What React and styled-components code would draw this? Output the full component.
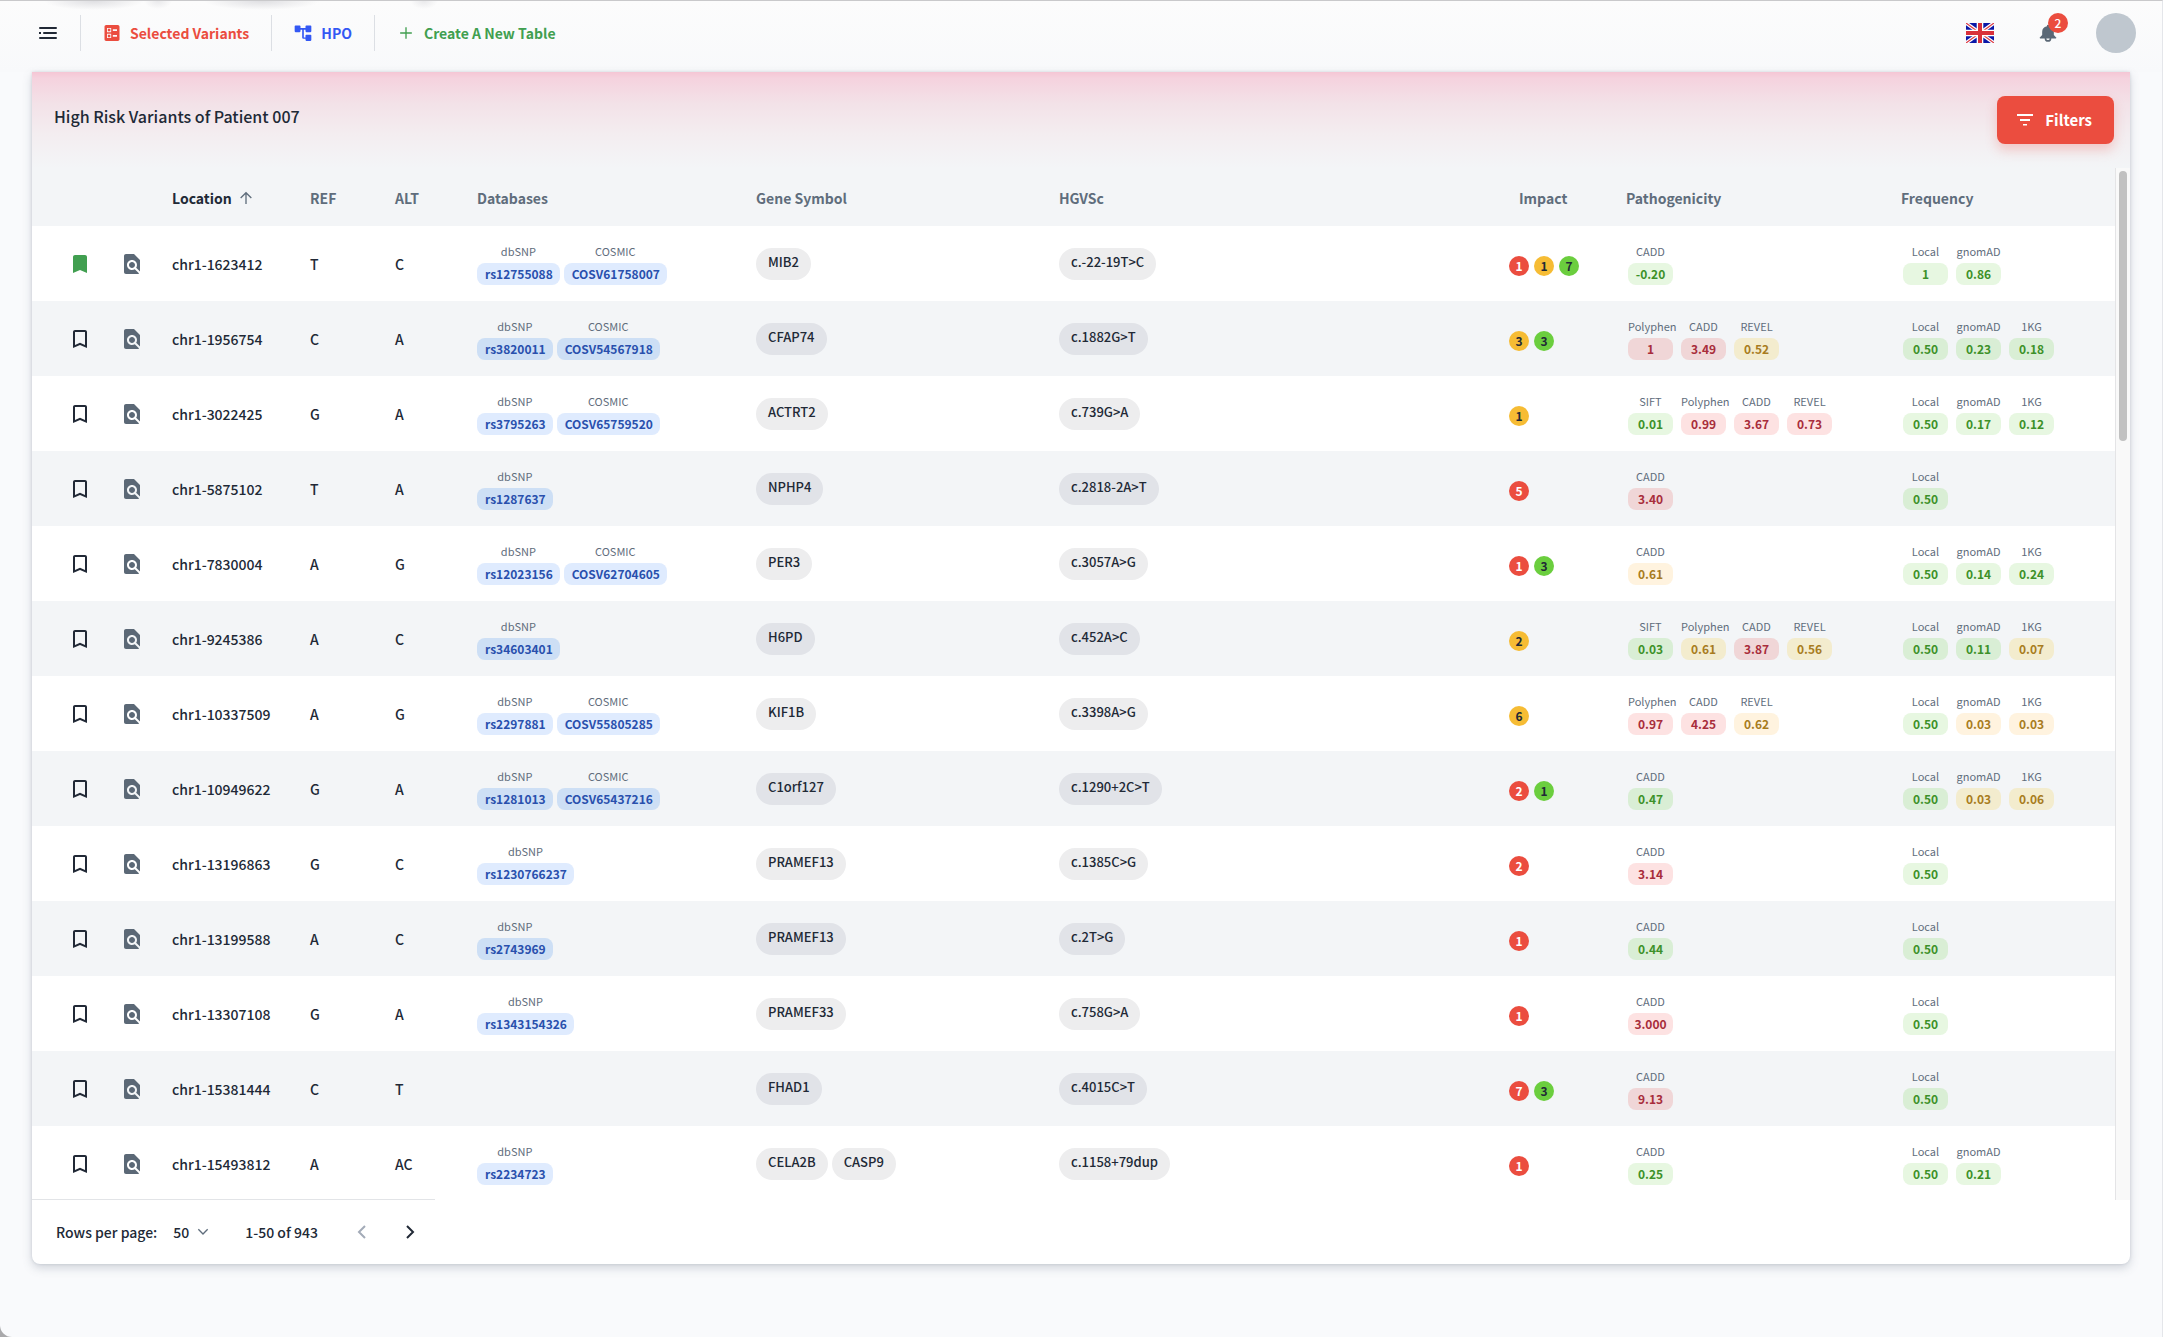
import React from 'react';
import styled, { createGlobalStyle, css } from 'styled-components';

const Global = createGlobalStyle`
  * { box-sizing: border-box; }
  html, body, #root { min-height: 100vh; }
  body {
    margin: 0;
    background: #f9fafc;
    color: #212936;
    font-family: "Noto Sans CJK SC", "Noto Sans", sans-serif;
    font-size: 14px;
    font-weight: 500;
    line-height: 24px;
  }
  button, select { font: inherit; color: inherit; }
  button { border: 0; background: none; padding: 0; cursor: pointer; }
`;

const Page = styled.div`
  min-height: 100vh;
  display: flex;
  flex-direction: column;
  background: #f9fafc;
  border-top: 1px solid #c9c9cb;
  border-right: 1px solid #e4e6ea;
  border-bottom-left-radius: 12px;
`;

const Backdrop = styled.div`
  background: #a9a9ab;
`;

const TopBar = styled.header`
  display: flex;
  align-items: center;
  justify-content: space-between;
  height: 71px;
  padding: 0 26px 7px 35px;
  background:
    radial-gradient(ellipse 50px 9px at 94px 0, #dfdfe2, transparent) no-repeat,
    radial-gradient(ellipse 14px 8px at 158px 0, #e9e9eb, transparent) no-repeat,
    radial-gradient(ellipse 58px 9px at 262px 0, #dfdfe2, transparent) no-repeat,
    radial-gradient(ellipse 14px 8px at 424px 0, #e9e9eb, transparent) no-repeat,
    linear-gradient(#fcfcfc, #f8f9fb);
`;

const Nav = styled.nav`
  display: flex;
  align-items: center;
`;

const MenuButton = styled.button`
  display: flex;
  padding: 0 21px 0 0;
`;

const Tab = styled.a`
  display: flex;
  align-items: center;
  height: 36px;
  gap: 8px;
  padding: 0 22px 0 21px;
  border-left: 1px solid #dcdfe4;
  color: ${(p) => p.$color};
  font-weight: 600;
  text-decoration: none;
  white-space: nowrap;
`;

const Tools = styled.div`
  display: flex;
  align-items: center;
  gap: 38px;
`;

const IconButton = styled.button`
  position: relative;
  display: flex;
`;

const BellButton = styled(IconButton)`
  margin: 0 0 0 6px;
`;

const Badge = styled.span`
  position: absolute;
  top: -10px;
  right: -10px;
  width: 20px;
  height: 20px;
  border-radius: 50%;
  background: #eb4d3f;
  color: #fff;
  font-size: 12px;
  line-height: 20px;
  text-align: center;
`;

const Avatar = styled.button`
  width: 40px;
  height: 40px;
  border-radius: 50%;
  background: #bfc7cf;
`;

const Card = styled.main`
  margin: 0 32px 72px;
  display: flex;
  flex-direction: column;
  background: #fff;
  border-radius: 0 0 8px 8px;
  box-shadow: 0 4px 10px rgba(90, 105, 125, 0.25), 0 0 3px rgba(90, 105, 125, 0.2);
`;

const CardHeader = styled.div`
  display: flex;
  justify-content: space-between;
  align-items: center;
  height: 96px;
  padding: 0 16px 0 22px;
  background: linear-gradient(#f5c6d5 0, #f5d2de 6px, #f3e2e8 32px, #f3edf0 62px, #f3f5f7 96px);
`;

const Title = styled.h1`
  margin: 0 0 8px;
  font-size: 16px;
  line-height: 24px;
  font-weight: 500;
`;

const FilterButton = styled.button`
  display: flex;
  align-items: center;
  gap: 8px;
  height: 48px;
  padding: 0 22px 0 16px;
  border-radius: 8px;
  background: #eb4d3f;
  color: #fff;
  font-size: 15px;
  font-weight: 600;
  line-height: 26px;
  box-shadow: 0 6px 12px rgba(235, 77, 63, 0.25);
`;

const Viewport = styled.div`
  display: flex;
  height: 1032px;
`;

const TableArea = styled.div`
  flex: 1;
  min-width: 0;
  overflow: hidden;
`;

const ScrollTrack = styled.div`
  width: 15px;
  padding: 3px;
  background: #f9f9f9;
  border-left: 1px solid #e4e4e6;
`;

const ScrollThumb = styled.div`
  width: 8px;
  height: 270px;
  border-radius: 4px;
  background: #c1c1c1;
`;

const Table = styled.table`
  width: 100%;
  table-layout: fixed;
  border-collapse: collapse;
`;

const Col = styled.col`
  width: ${(p) => (p.$w ? `${p.$w}px` : 'auto')};
`;

const HeadCell = styled.th`
  height: 58px;
  padding: 2px 0 0 ${(p) => p.$inset || 16}px;
  background: #f3f5f7;
  color: ${(p) => (p.$active ? '#212936' : '#5f6d7c')};
  font-weight: 600;
  text-align: left;
  white-space: nowrap;
`;

const SortButton = styled.button`
  display: flex;
  align-items: center;
  gap: 6px;
  font-weight: 600;
`;

const Row = styled.tr`
  height: 75px;
  background: ${(p) => (p.$alt ? '#f3f5f7' : '#fff')};
`;

const Cell = styled.td`
  padding: 0 0 0 ${(p) => p.$inset || 16}px;
  vertical-align: middle;
  white-space: nowrap;
`;

const Group = styled.div`
  display: flex;
  gap: ${(p) => p.$gap}px;
`;

const Labelled = styled.div`
  display: flex;
  flex-direction: column;
  text-align: center;
  ${(p) => p.$w && css`width: ${p.$w}px;`}
`;

const Caption = styled.span`
  padding-bottom: 4px;
  color: #5f6d7c;
  font-size: 11px;
  font-weight: 400;
  line-height: 16px;
  white-space: nowrap;
`;

const DbLink = styled.a`
  height: 22px;
  padding: 0 7px 0 8px;
  border-radius: 8px;
  background: ${(p) => (p.$alt ? '#cddff5' : '#dfebfe')};
  color: #2950ad;
  font-size: 12px;
  line-height: 22px;
  font-weight: 700;
  text-decoration: none;
`;

const tones = {
  g: { bg: '#e7f7e1', alt: '#d9eed5', fg: '#3d9129' },
  r: { bg: '#fde2e2', alt: '#f0d6d7', fg: '#a82d3b' },
  y: { bg: '#fff3df', alt: '#f3ecce', fg: '#a87c1f' },
};

const Score = styled.span`
  height: 22px;
  border-radius: 8px;
  background: ${(p) => (p.$alt ? tones[p.$tone].alt : tones[p.$tone].bg)};
  color: ${(p) => tones[p.$tone].fg};
  font-size: 12px;
  line-height: 22px;
  font-weight: 700;
`;

const Pill = styled.span`
  height: 32px;
  padding: 0 12px;
  border-radius: 16px;
  background: ${(p) => (p.$alt ? '#e1e3e8' : '#ededee')};
  font-size: 13px;
  line-height: 28px;
`;

const PillGroup = styled(Group)`
  padding-top: 1px;
`;

const impactTones = {
  r: ['#eb4d3f', '#fff'],
  y: ['#f6bc34', '#212936'],
  g: ['#6bce3e', '#212936'],
};

const Impact = styled.span`
  width: 20px;
  height: 20px;
  border-radius: 50%;
  background: ${(p) => impactTones[p.$tone][0]};
  color: ${(p) => impactTones[p.$tone][1]};
  font-size: 12px;
  line-height: 20px;
  font-weight: 600;
  text-align: center;
`;

const ImpactGroup = styled(Group)`
  padding-top: 5px;
`;

const ScoreGroup = styled(Group)`
  padding-left: 2px;
`;

const Footer = styled.footer`
  display: flex;
  align-items: center;
  height: 64px;
  padding-left: 24px;
`;

const FooterRule = styled.hr`
  width: 403px;
  height: 1px;
  margin: -1px 0 0;
  border: 0;
  background: #e2e4e7;
`;

const SelectWrap = styled.span`
  display: flex;
  align-items: center;
  padding-left: 16px;
`;

const Select = styled.select`
  appearance: none;
  width: 20px;
  margin-right: 2px;
  padding: 0;
  border: 0;
  background: none;
`;

const Range = styled.span`
  padding: 0 32px 0 34px;
`;

const Pager = styled.div`
  display: flex;
  gap: 24px;
`;

const Svg = ({ size = 24, children, ...rest }) => (
  <svg width={size} height={size} viewBox="0 0 24 24" fill="currentColor" aria-hidden="true" {...rest}>
    {children}
  </svg>
);

const MenuIcon = () => (
  <Svg>
    <path d="M5 6h16a1 1 0 0 1 0 2H5a1 1 0 0 1 0-2zM4 11h2v2H4zM9 11h12a1 1 0 0 1 0 2H9a1 1 0 0 1 0-2zM5 16h16a1 1 0 0 1 0 2H5a1 1 0 0 1 0-2z" />
  </Svg>
);
const BallotIcon = () => (
  <Svg size={20}>
    <path d="M13 9.500h5v-2h-5v2zm0 7h5v-2h-5v2zm6 5H5c-1.100 0-2-.9-2-2V4.500c0-1.100.9-2 2-2h14c1.100 0 2 .9 2 2v15c0 1.100-.9 2-2 2zM6 11h5V6H6v5zm1-4h3v3H7V7zM6 18h5v-5H6v5zm1-4h3v3H7v-3z" />
  </Svg>
);
const TreeIcon = () => (
  <Svg size={20}>
    <path d="M21 11h-5a1 1 0 0 1-1-1V8h-2v9.500h2V15a1 1 0 0 1 1-1h5a1 1 0 0 1 1 1v5.500a1 1 0 0 1-1 1h-5a1 1 0 0 1-1-1V19h-2.500a1.500 1.500 0 0 1-1.500-1.500V8H9v2a1 1 0 0 1-1 1H3a1 1 0 0 1-1-1V4a1 1 0 0 1 1-1h5a1 1 0 0 1 1 1v2h6V4a1 1 0 0 1 1-1h5a1 1 0 0 1 1 1v6a1 1 0 0 1-1 1z" />
  </Svg>
);
const PlusIcon = () => (
  <Svg size={20}>
    <path d="M19 12.800h-6.200V19h-1.600v-6.200H5v-1.600h6.200V5h1.600v6.200H19z" />
  </Svg>
);
const BellIcon = () => (
  <Svg size={20} color="#5b6876">
    <path d="M19 14.500V10.800A7 7 0 0 0 13.300 3.900V3.500a1.300 1.300 0 0 0-2.600 0v.4A7 7 0 0 0 5 10.800v3.700L2.500 17a.8.8 0 0 0 .6 1.500h4.900a4 4 0 0 0 8 0h4.900a.8.8 0 0 0 .6-1.500zM12 20.500a2 2 0 0 1-2-2h4a2 2 0 0 1-2 2z" />
  </Svg>
);
const FlagIcon = () => (
  <svg width="28" height="20" viewBox="0 0 28 20" aria-hidden="true">
    <rect width="28" height="20" fill="#0a17a7" />
    <path d="M0 0l28 20M28 0L0 20" stroke="#fff" strokeWidth="3.600" />
    <path d="M0 0l11 8M28 20l-11-8M28 0L17 8M0 20l11-8" stroke="#db3b45" strokeWidth="1.200" />
    <path d="M14 0v20M0 10h28" stroke="#fff" strokeWidth="6.600" />
    <path d="M14 0v20M0 10h28" stroke="#d9303a" strokeWidth="4" />
  </svg>
);
const FilterIcon = () => (
  <Svg>
    <path d="M4 6h16v2H4zM7 11h10v2H7zM10 16h4v1.500h-4z" />
  </Svg>
);
const ArrowUpIcon = () => (
  <Svg size={16} color="#5f6d7c" fill="none" stroke="currentColor" strokeWidth="2">
    <path d="M12 21V4M4 12l8-8 8 8" />
  </Svg>
);
const BookmarkIcon = ({ on }) => (
  <Svg color={on ? '#419f50' : '#212936'} display="block">
    <path
      d={
        on
          ? 'M17 3H7c-1.100 0-2 .9-2 2v16l7-3 7 3V5c0-1.100-.9-2-2-2z'
          : 'M17 3H7c-1.100 0-2 .9-2 2v16l7-3 7 3V5c0-1.100-.9-2-2-2zm0 15l-5-2.180L7 18V5h10v13z'
      }
    />
  </Svg>
);
const InspectIcon = () => (
  <Svg color="#5b6876" display="block">
    <path d="M20 19.590V8l-6-6H6c-1.100 0-1.990.9-1.990 2L4 20c0 1.100.89 2 1.990 2H18c.45 0 .85-.15 1.190-.4l-4.430-4.430c-.8.520-1.740.830-2.760.830-2.760 0-5-2.240-5-5s2.240-5 5-5 5 2.240 5 5c0 1.020-.31 1.960-.83 2.750L20 19.590zM9 13c0 1.660 1.340 3 3 3s3-1.340 3-3-1.340-3-3-3-3 1.340-3 3z" />
  </Svg>
);
const Chevron = ({ d, color, size = 24, width = 2 }) => (
  <Svg size={size} fill="none" stroke={color} strokeWidth={width} display="block">
    <path d={d} />
  </Svg>
);

const P = ['Polyphen', 'CADD', 'REVEL'];
const SP = ['SIFT', ...P];
const F = ['Local', 'gnomAD', '1KG'];

// Scores are written as "<tone><value>"; impacts as "<tone><count>".
const rows = [
  ['chr1-1623412', 'T', 'C', 'rs12755088', 'COSV61758007', ['MIB2'], 'c.-22-19T>C', 'r1 y1 g7', ['CADD'], 'g-0.20', 'g1 g0.86'],
  ['chr1-1956754', 'C', 'A', 'rs3820011', 'COSV54567918', ['CFAP74'], 'c.1882G>T', 'y3 g3', P, 'r1 r3.49 y0.52', 'g0.50 g0.23 g0.18'],
  ['chr1-3022425', 'G', 'A', 'rs3795263', 'COSV65759520', ['ACTRT2'], 'c.739G>A', 'y1', SP, 'g0.01 r0.99 r3.67 r0.73', 'g0.50 g0.17 g0.12'],
  ['chr1-5875102', 'T', 'A', 'rs1287637', '', ['NPHP4'], 'c.2818-2A>T', 'r5', ['CADD'], 'r3.40', 'g0.50'],
  ['chr1-7830004', 'A', 'G', 'rs12023156', 'COSV62704605', ['PER3'], 'c.3057A>G', 'r1 g3', ['CADD'], 'y0.61', 'g0.50 g0.14 g0.24'],
  ['chr1-9245386', 'A', 'C', 'rs34603401', '', ['H6PD'], 'c.452A>C', 'y2', SP, 'g0.03 y0.61 r3.87 y0.56', 'g0.50 g0.11 y0.07'],
  ['chr1-10337509', 'A', 'G', 'rs2297881', 'COSV55805285', ['KIF1B'], 'c.3398A>G', 'y6', P, 'r0.97 r4.25 y0.62', 'g0.50 y0.03 y0.03'],
  ['chr1-10949622', 'G', 'A', 'rs1281013', 'COSV65437216', ['C1orf127'], 'c.1290+2C>T', 'r2 g1', ['CADD'], 'g0.47', 'g0.50 y0.03 y0.06'],
  ['chr1-13196863', 'G', 'C', 'rs1230766237', '', ['PRAMEF13'], 'c.1385C>G', 'r2', ['CADD'], 'r3.14', 'g0.50'],
  ['chr1-13199588', 'A', 'C', 'rs2743969', '', ['PRAMEF13'], 'c.2T>G', 'r1', ['CADD'], 'g0.44', 'g0.50'],
  ['chr1-13307108', 'G', 'A', 'rs1343154326', '', ['PRAMEF33'], 'c.758G>A', 'r1', ['CADD'], 'r3.000', 'g0.50'],
  ['chr1-15381444', 'C', 'T', '', '', ['FHAD1'], 'c.4015C>T', 'r7 g3', ['CADD'], 'r9.13', 'g0.50'],
  ['chr1-15493812', 'A', 'AC', 'rs2234723', '', ['CELA2B', 'CASP9'], 'c.1158+79dup', 'r1', ['CADD'], 'g0.25', 'g0.50 g0.21'],
];

const Scores = ({ labels, values, alt }) => (
  <ScoreGroup $gap={8}>
    {values.split(' ').map((v, i) => (
      <Labelled key={labels[i]} $w={45}>
        <Caption>{labels[i]}</Caption>
        <Score $tone={v[0]} $alt={alt}>{v.slice(1)}</Score>
      </Labelled>
    ))}
  </ScoreGroup>
);

const Databases = ({ items, alt }) => (
  <Group $gap={4}>
    {items.filter(([, id]) => id).map(([name, id]) => (
      <Labelled key={name}>
        <Caption>{name}</Caption>
        <DbLink href={`#${id}`} $alt={alt}>{id}</DbLink>
      </Labelled>
    ))}
  </Group>
);

const VariantRow = ({ row, index }) => {
  const [loc, ref, alt, snp, cosmic, genes, hgvs, impact, labels, scores, freq] = row;
  const shaded = index % 2 === 1;
  return (
    <Row $alt={shaded}>
      <Cell $inset={36}>
        <IconButton aria-label={`Bookmark ${loc}`}><BookmarkIcon on={index === 0} /></IconButton>
      </Cell>
      <Cell>
        <IconButton aria-label={`Inspect ${loc}`}><InspectIcon /></IconButton>
      </Cell>
      <Cell>{loc}</Cell>
      <Cell>{ref}</Cell>
      <Cell>{alt}</Cell>
      <Cell><Databases items={[['dbSNP', snp], ['COSMIC', cosmic]]} alt={shaded} /></Cell>
      <Cell>
        <PillGroup $gap={4}>{genes.map((g) => <Pill key={g} $alt={shaded}>{g}</Pill>)}</PillGroup>
      </Cell>
      <Cell><PillGroup $gap={4}><Pill $alt={shaded}>{hgvs}</Pill></PillGroup></Cell>
      <Cell>
        <ImpactGroup $gap={5}>
          {impact.split(' ').map((v) => <Impact key={v} $tone={v[0]}>{v.slice(1)}</Impact>)}
        </ImpactGroup>
      </Cell>
      <Cell><Scores labels={labels} values={scores} alt={shaded} /></Cell>
      <Cell><Scores labels={F} values={freq} alt={shaded} /></Cell>
    </Row>
  );
};

export default function App() {
  return (
    <Backdrop>
      <Global />
      <Page>
        <TopBar>
          <Nav>
            <MenuButton aria-label="Menu"><MenuIcon /></MenuButton>
            <Tab href="#selected" $color="#eb4d3f"><BallotIcon />Selected Variants</Tab>
            <Tab href="#hpo" $color="#3358f4"><TreeIcon />HPO</Tab>
            <Tab href="#new" $color="#419f50"><PlusIcon />Create A New Table</Tab>
          </Nav>
          <Tools>
            <IconButton aria-label="Language"><FlagIcon /></IconButton>
            <BellButton aria-label="Notifications"><BellIcon /><Badge>2</Badge></BellButton>
            <Avatar aria-label="Account" />
          </Tools>
        </TopBar>
        <Card>
          <CardHeader>
            <Title>High Risk Variants of Patient 007</Title>
            <FilterButton><FilterIcon />Filters</FilterButton>
          </CardHeader>
          <Viewport>
            <TableArea>
              <Table>
                <colgroup>
                  {[72, 52, 138, 85, 82, 279, 303, 0, 117, 275, 230].map((w, i) => <Col key={i} $w={w} />)}
                </colgroup>
                <thead>
                  <tr>
                    <HeadCell aria-label="Bookmark" />
                    <HeadCell aria-label="Inspect" />
                    <HeadCell $active><SortButton>Location<ArrowUpIcon /></SortButton></HeadCell>
                    <HeadCell>REF</HeadCell>
                    <HeadCell>ALT</HeadCell>
                    <HeadCell>Databases</HeadCell>
                    <HeadCell>Gene Symbol</HeadCell>
                    <HeadCell>HGVSc</HeadCell>
                    <HeadCell $inset={26}>Impact</HeadCell>
                    <HeadCell>Pathogenicity</HeadCell>
                    <HeadCell>Frequency</HeadCell>
                  </tr>
                </thead>
                <tbody>
                  {rows.map((row, i) => <VariantRow key={row[0]} row={row} index={i} />)}
                </tbody>
              </Table>
            </TableArea>
            <ScrollTrack><ScrollThumb /></ScrollTrack>
          </Viewport>
          <FooterRule />
          <Footer>
            <label htmlFor="rows-per-page">Rows per page:</label>
            <SelectWrap>
              <Select id="rows-per-page" defaultValue="50">
                <option>50</option>
                <option>100</option>
              </Select>
              <Chevron size={16} color="#5f6d7c" d="M5 8l7 7 7-7" />
            </SelectWrap>
            <Range>1-50 of 943</Range>
            <Pager>
              <IconButton aria-label="Previous page"><Chevron color="#a3abb8" d="M15 6l-6 6 6 6" /></IconButton>
              <IconButton aria-label="Next page"><Chevron color="#212936" d="M9 6l6 6-6 6" /></IconButton>
            </Pager>
          </Footer>
        </Card>
      </Page>
    </Backdrop>
  );
}
